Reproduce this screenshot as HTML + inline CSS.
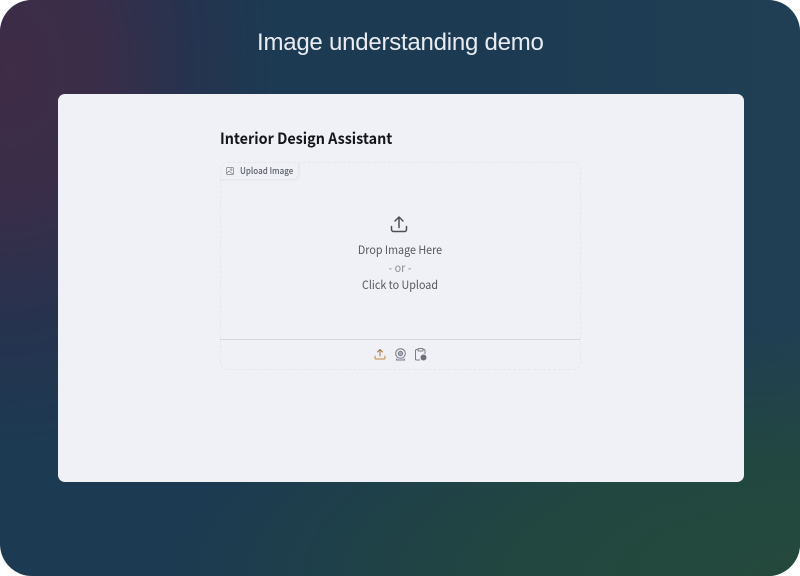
<!DOCTYPE html>
<html><head><meta charset="utf-8"><style>
html,body{margin:0;padding:0;width:800px;height:576px;overflow:hidden;background:#fff}
#bg{position:absolute;left:0;top:0;width:800px;height:576px;border-radius:32px;overflow:hidden;background:#1c3a52}
#bg i{position:absolute;inset:0;display:block}
.t{position:absolute;white-space:nowrap;font-family:"Noto Sans CJK JP","Liberation Sans",sans-serif;transform-origin:left top}
.c{position:absolute;white-space:nowrap;font-family:"Noto Sans CJK JP","Liberation Sans",sans-serif;left:300px;width:200px;text-align:center;font-size:11.5px;line-height:18px;transform:scaleX(.934)}
svg{position:absolute;fill:none}
</style></head><body>
<div id="bg">
<i style="background:linear-gradient(90deg,rgba(31,62,84,0) 60%,rgba(34,64,84,.8) 100%)"></i>
<i style="background:radial-gradient(ellipse 265px 380px at 10px 70px,#3f2c46 0%,rgba(60,44,72,.9) 35%,rgba(48,44,76,.5) 68%,rgba(40,46,80,0) 100%)"></i>
<i style="background:radial-gradient(ellipse 640px 250px at 800px 576px,#24493c 0%,rgba(34,72,62,.9) 45%,rgba(34,72,62,0) 100%)"></i>
</div>
<div class="t" style="left:257px;top:27px;font:24px/32px 'Liberation Sans',sans-serif;color:#e9edf3;letter-spacing:-.23px">Image understanding demo</div>
<div style="position:absolute;left:58px;top:94px;width:686px;height:388px;background:#f0f1f7;border-radius:7px"></div>
<div class="t" style="left:220px;top:126px;font-size:15.500px;line-height:24px;font-weight:700;color:#14161c;transform:scaleX(.925)">Interior Design Assistant</div>
<div style="position:absolute;left:219.500px;top:161.500px;box-sizing:border-box;width:361px;height:208px;border:1px dashed #e6e7ee;border-radius:8px"></div>
<div style="position:absolute;left:220px;top:162px;width:79px;height:18px;box-sizing:border-box;border-right:1px solid #e4e5ec;border-bottom:1px solid #e4e5ec;border-radius:0 0 6px 0;box-shadow:1px 1px 2px rgba(0,0,0,.03)"></div>
<svg style="left:226px;top:167px" width="8" height="8" viewBox="0 0 8 8" stroke="#7a7e87" stroke-width=".7"><rect x=".5" y=".5" width="7" height="7" rx="1"/><path d="M.8 6.200 3 4l3.800 3"/><circle cx="5.300" cy="2.600" r=".7"/></svg>
<div class="t" style="left:240px;top:164px;font-size:9px;line-height:14px;font-weight:500;color:#5a5e67;transform:scaleX(.89)">Upload Image</div>
<svg style="left:390px;top:215px" width="18" height="18" viewBox="0 0 18 18" stroke="#4b4f58" stroke-width="1.500" stroke-linecap="round" stroke-linejoin="round"><path d="M1.500 11.500v3a2 2 0 0 0 2 2h11a2 2 0 0 0 2-2v-3"/><path d="M9 12.500V2M5 6l4-4 4 4"/></svg>
<div class="c" style="top:241px;color:#55585f">Drop Image Here</div>
<div class="c" style="top:259px;color:#8b8e96">- or -</div>
<div class="c" style="top:276px;color:#55585f">Click to Upload</div>
<div style="position:absolute;left:220px;top:339px;width:360px;height:1px;background:#d5d6de"></div>
<svg style="left:374px;top:348px" width="12" height="12" viewBox="0 0 12 12" stroke-width="1" stroke-linecap="round" stroke-linejoin="round"><path d="M1 8v2a1 1 0 0 0 1 1h8a1 1 0 0 0 1-1V8" stroke="#c9853f"/><path d="M6 8V1.500M3.500 4 6 1.500 8.500 4" stroke="#a8702f"/></svg>
<svg style="left:394px;top:348px" width="13" height="13" viewBox="0 0 13 13" stroke="#777b84" stroke-width="1"><circle cx="6.500" cy="5.500" r="4.800"/><circle cx="6.500" cy="5.500" r="2.200" fill="#a9acb4"/><path d="M3 10.500 2.500 12h8L10 10.500"/></svg>
<svg style="left:415px;top:348px" width="12" height="13" viewBox="0 0 12 13" stroke="#777b84" stroke-width="1"><path d="M3 1.500H1.500a1 1 0 0 0-1 1v8.500a1 1 0 0 0 1 1H5M8 1.500h1a1 1 0 0 1 1 1V6"/><rect x="3" y=".5" width="5" height="2.500" rx=".5"/><circle cx="8.500" cy="9.500" r="3" fill="#6b6f78" stroke="none"/></svg>
</body></html>
